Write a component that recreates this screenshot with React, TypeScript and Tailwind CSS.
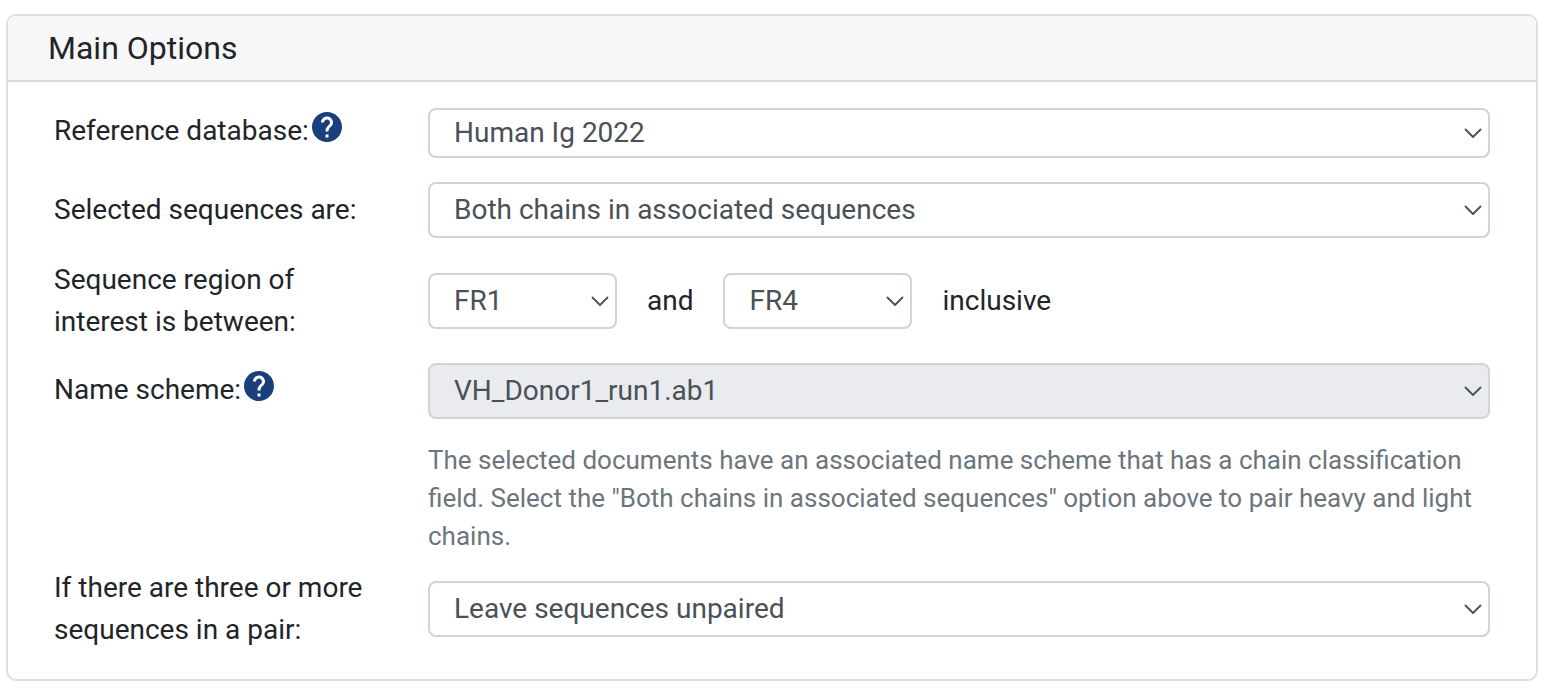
import React from 'react';
import clsx from 'clsx';

interface SelectFieldProps {
  id: string;
  options: string[];
  label?: string;
  disabled?: boolean;
  compact?: boolean;
}

const SelectField: React.FC<SelectFieldProps> = ({ id, options, label, disabled, compact }) => (
  <div className="relative w-full">
    <select
      id={id}
      aria-label={label}
      disabled={disabled}
      className={clsx(
        'block w-full appearance-none rounded-lg border-2 border-[#ced4da] pl-6 pr-10 text-[28px] text-[#495057] opacity-100',
        compact ? 'h-[50px]' : 'h-14',
        disabled ? 'bg-[#eaebef]' : 'bg-white'
      )}
    >
      {options.map((option) => (
        <option key={option}>{option}</option>
      ))}
    </select>
    {/* Chevron */}
    <svg
      className="pointer-events-none absolute inset-y-0 right-2 my-auto h-3 w-[18px]"
      viewBox="0 0 18 12"
      fill="none"
      stroke="#495057"
      strokeWidth="1.8"
      strokeLinecap="round"
      strokeLinejoin="round"
    >
      <path d="M1.5 2.5L9 10L16.5 2.5" />
    </svg>
  </div>
);

const HelpButton: React.FC<{ topic: string }> = ({ topic }) => (
  <button type="button" aria-label={`Help: ${topic}`} className="ml-[3px] mt-0.5 size-[30px] shrink-0">
    <svg viewBox="2 2 20 20" className="size-full">
      <path
        fill="#193f7c"
        d="M12 2C6.48 2 2 6.48 2 12s4.48 10 10 10 10-4.48 10-10S17.52 2 12 2zm1 17h-2v-2h2v2zm2.07-7.75l-.9.92C13.45 12.9 13 13.5 13 15h-2v-.5c0-1.1.45-2.1 1.17-2.83l1.24-1.26c.37-.36.59-.86.59-1.41 0-1.1-.9-2-2-2s-2 .9-2 2H8c0-2.21 1.79-4 4-4s4 1.79 4 4c0 .88-.36 1.68-.93 2.25z"
      />
    </svg>
  </button>
);

interface FormRowProps {
  label: string;
  htmlFor: string;
  help?: boolean;
  className?: string;
  labelClassName?: string;
  children: React.ReactNode;
}

const FormRow: React.FC<FormRowProps> = ({ label, htmlFor, help, className, labelClassName, children }) => (
  <div className={clsx('flex', className)}>
    <div className={clsx('flex w-1/4 shrink-0 items-start px-[30px]', labelClassName)}>
      <label htmlFor={htmlFor}>{label}</label>
      {help && <HelpButton topic={label} />}
    </div>
    <div className="min-w-0 flex-1 px-[30px]">{children}</div>
  </div>
);

const App: React.FC = () => {
  return (
    <main className="bg-white px-[6px] pt-[14px] pb-[10px] font-[Roboto,sans-serif] text-[28px] leading-[42px] text-[#212529]">
      <section className="overflow-hidden rounded-[10px] border-2 border-[#dfdfdf]">
        <header className="border-b-2 border-[#d9d9d9] bg-[#f7f7f7] px-10 py-3">
          <h2 className="text-[32px] leading-10">Main Options</h2>
        </header>

        <form className="px-4 pt-[26px] pb-7">
          <FormRow label="Reference database:" htmlFor="database" help className="mb-6" labelClassName="pt-0.5">
            <SelectField id="database" options={['Human Ig 2022']} compact />
          </FormRow>

          <FormRow label="Selected sequences are:" htmlFor="sequences" className="mb-[21px] items-center">
            <SelectField id="sequences" options={['Both chains in associated sequences']} />
          </FormRow>

          <FormRow label="Sequence region of interest is between:" htmlFor="region-start" className="mb-5 items-center">
            <div className="flex items-center gap-[30px]">
              <div className="w-[189px]">
                <SelectField id="region-start" options={['FR1']} />
              </div>
              <span>and</span>
              <div className="w-[189px]">
                <SelectField id="region-end" label="Sequence region end" options={['FR4']} />
              </div>
              <span>inclusive</span>
            </div>
          </FormRow>

          <FormRow label="Name scheme:" htmlFor="name-scheme" help className="mb-3" labelClassName="pt-1.5">
            <SelectField id="name-scheme" options={['VH_Donor1_run1.ab1']} disabled />
            <p className="mt-[22px] text-[26px] leading-[38px] text-[#6c757d]">
              The selected documents have an associated name scheme that has a chain classification field. Select the
              "Both chains in associated sequences" option above to pair heavy and light chains.
            </p>
          </FormRow>

          <FormRow label="If there are three or more sequences in a pair:" htmlFor="pairing" className="items-center">
            <SelectField id="pairing" options={['Leave sequences unpaired']} />
          </FormRow>
        </form>
      </section>
    </main>
  );
};

export default App;
